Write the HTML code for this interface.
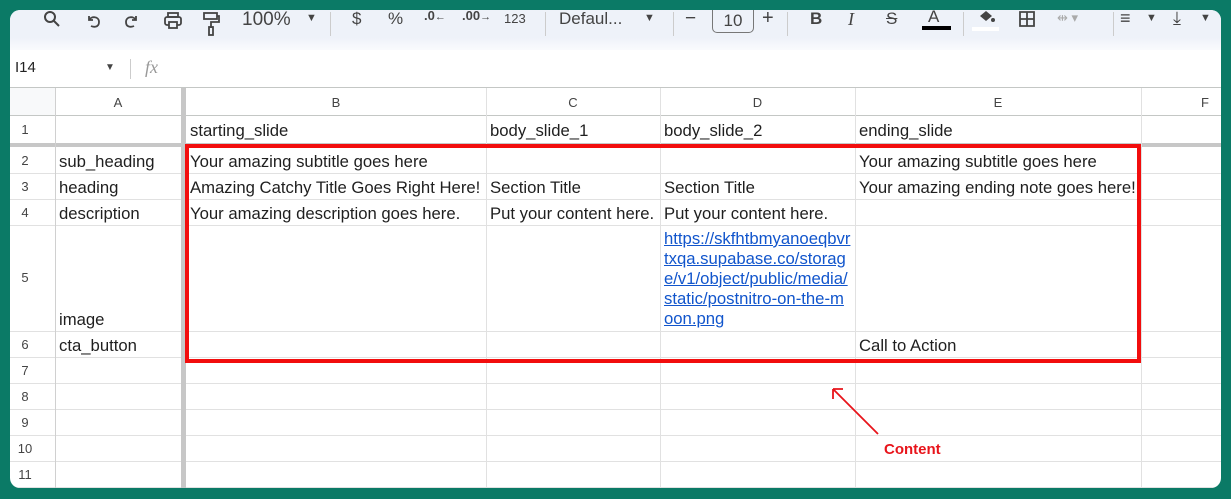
<!DOCTYPE html>
<html><head><meta charset="utf-8"><style>
*{margin:0;padding:0;box-sizing:border-box}
body{width:1231px;height:499px;background:#0b7a66;position:relative;overflow:hidden;font-family:"Liberation Sans",Arial,sans-serif}
#p{position:absolute;left:10px;top:10px;width:1211px;height:478px;background:#fff;border-radius:10px;overflow:hidden}
#tb{position:absolute;left:0;top:0;width:1211px;height:40px;background:linear-gradient(#eef2f9 0,#eef2f9 28px,#f6f8fc 36px,#fff 48px)}
.a{position:absolute;white-space:nowrap}
.t{font-size:16.7px;color:#1f1f1f}
.h{font-size:13px;color:#444;text-align:center}
.hl{position:absolute;height:1px;background:#e1e1e1;left:0;width:1211px}
.vl{position:absolute;width:1px;background:#e1e1e1;top:78px;height:400px}
#ti{position:absolute;left:0;top:2px;width:1211px;height:30px}
</style></head><body>
<div id="p">
<div id="tb"></div>
<div id="ti">
<svg class="a" style="left:32px;top:-2px" width="20" height="20" viewBox="0 0 20 20"><circle cx="8" cy="7" r="5" fill="none" stroke="#444" stroke-width="2"/><path d="M12 11l5 5" stroke="#444" stroke-width="2"/></svg>
<svg class="a" style="left:75px;top:0" width="18" height="18" viewBox="0 0 18 18"><path d="M4 4v4h4M4 8c2-4 10-4 10 2s-6 5-8 4" fill="none" stroke="#444" stroke-width="1.8"/></svg>
<svg class="a" style="left:112px;top:0" width="18" height="18" viewBox="0 0 18 18"><path d="M14 4v4h-4M14 8c-2-4-10-4-10 2s6 5 8 4" fill="none" stroke="#444" stroke-width="1.8"/></svg>
<svg class="a" style="left:152px;top:-2px" width="22" height="22" viewBox="0 0 22 22"><rect x="6" y="3" width="10" height="4" fill="none" stroke="#444" stroke-width="1.8"/><rect x="3" y="7" width="16" height="8" rx="2" fill="none" stroke="#444" stroke-width="1.8"/><rect x="7" y="12" width="8" height="6" fill="#eef2f9" stroke="#444" stroke-width="1.8"/></svg>
<svg class="a" style="left:191px;top:-2px" width="20" height="28" viewBox="0 0 20 28"><rect x="3" y="3" width="13" height="6" fill="none" stroke="#444" stroke-width="1.8"/><path d="M16 6h2v6h-8v6" fill="none" stroke="#444" stroke-width="1.8"/><rect x="8" y="17" width="4" height="8" fill="none" stroke="#444" stroke-width="1.8"/></svg>
<div class="a" style="left:232px;top:-3px;font-size:19px;color:#444">100%</div>
<div class="a" style="left:296px;top:0;font-size:11px;color:#444">▼</div>
<div class="a" style="left:320px;top:0;width:1px;height:24px;background:#ccc"></div>
<div class="a" style="left:342px;top:-3px;font-size:17px;color:#444">$</div>
<div class="a" style="left:378px;top:-3px;font-size:17px;color:#444">%</div>
<div class="a" style="left:414px;top:-4px;font-size:13px;color:#444;font-weight:bold">.0<span style="font-size:11px">←</span></div>
<div class="a" style="left:452px;top:-4px;font-size:13px;color:#444;font-weight:bold">.00<span style="font-size:11px">→</span></div>
<div class="a" style="left:494px;top:-1px;font-size:13px;color:#444">123</div>
<div class="a" style="left:535px;top:0;width:1px;height:24px;background:#ccc"></div>
<div class="a" style="left:549px;top:-3px;font-size:17px;color:#444">Defaul...</div>
<div class="a" style="left:634px;top:0;font-size:11px;color:#444">▼</div>
<div class="a" style="left:663px;top:0;width:1px;height:24px;background:#ccc"></div>
<div class="a" style="left:675px;top:-4px;font-size:19px;color:#444">−</div>
<div class="a" style="left:702px;top:-8px;width:42px;height:29px;border:1px solid #777;border-radius:5px;font-size:17px;color:#444;text-align:center;padding-top:6px">10</div>
<div class="a" style="left:752px;top:-5px;font-size:20px;color:#444">+</div>
<div class="a" style="left:777px;top:0;width:1px;height:24px;background:#ccc"></div>
<div class="a" style="left:800px;top:-3px;font-size:17px;font-weight:bold;color:#444">B</div>
<div class="a" style="left:838px;top:-3px;font-size:18px;font-family:'Liberation Serif',serif;font-style:italic;color:#444">I</div>
<div class="a" style="left:876px;top:-3px;font-size:17px;color:#444;text-decoration:line-through">S</div>
<div class="a" style="left:918px;top:-5px;font-size:17px;color:#444">A</div>
<div class="a" style="left:912px;top:14px;width:29px;height:4px;background:#000"></div>
<div class="a" style="left:953px;top:0;width:1px;height:24px;background:#ccc"></div>
<svg class="a" style="left:966px;top:-2px" width="20" height="16" viewBox="0 0 20 16"><path d="M4 6l6-5 6 5-6 5z" fill="#444"/><circle cx="17" cy="10" r="2" fill="#444"/></svg>
<div class="a" style="left:962px;top:15px;width:27px;height:4px;background:#fff"></div>
<svg class="a" style="left:1008px;top:-2px" width="18" height="18" viewBox="0 0 18 18"><path d="M2 2h14v14H2zM9 2v14M2 9h14" fill="none" stroke="#444" stroke-width="1.8"/></svg>
<div class="a" style="left:1047px;top:-2px;font-size:13px;color:#aaa">⇹ ▾</div>
<div class="a" style="left:1103px;top:0;width:1px;height:24px;background:#ccc"></div>
<div class="a" style="left:1110px;top:-4px;font-size:18px;color:#444">≡</div>
<div class="a" style="left:1136px;top:0;font-size:11px;color:#444">▼</div>
<div class="a" style="left:1163px;top:-4px;font-size:18px;color:#444">⤓</div>
<div class="a" style="left:1190px;top:0;font-size:11px;color:#444">▼</div>
</div>
<div class="a" style="left:5px;top:49px;font-size:15px;color:#222">I14</div>
<div class="a" style="left:95px;top:52px;font-size:10px;color:#444">▼</div>
<div class="a" style="left:120px;top:49px;width:1px;height:20px;background:#ccc"></div>
<div class="a" style="left:135px;top:47px;font-size:18px;font-family:'Liberation Serif',serif;font-style:italic;color:#999">fx</div>
<div class="a" style="left:0;top:78px;width:45px;height:28px;background:#f8f9fa"></div>
<div class="hl" style="top:77px;background:#c4c7c5"></div>
<div class="hl" style="top:105px;background:#c4c7c5"></div>
<div class="hl" style="top:133px;height:4px;background:#c7c7c7"></div>
<div class="hl" style="top:163px"></div>
<div class="hl" style="top:189px"></div>
<div class="hl" style="top:215px"></div>
<div class="hl" style="top:321px"></div>
<div class="hl" style="top:347px"></div>
<div class="hl" style="top:373px"></div>
<div class="hl" style="top:399px"></div>
<div class="hl" style="top:425px"></div>
<div class="hl" style="top:451px"></div>
<div class="hl" style="top:477px"></div>
<div class="vl" style="left:45px;background:#d0d0d0"></div>
<div class="vl" style="left:171px;width:5px;background:#c7c7c7"></div>
<div class="vl" style="left:476px"></div>
<div class="vl" style="left:650px"></div>
<div class="vl" style="left:845px"></div>
<div class="vl" style="left:1131px"></div>
<div class="a h" style="left:45px;top:85px;width:126px">A</div>
<div class="a h" style="left:176px;top:85px;width:300px">B</div>
<div class="a h" style="left:476px;top:85px;width:174px">C</div>
<div class="a h" style="left:650px;top:85px;width:195px">D</div>
<div class="a h" style="left:845px;top:85px;width:286px">E</div>
<div class="a h" style="left:1131px;top:85px;width:130px;text-align:left;padding-left:60px">F</div>
<div class="a h" style="left:0;top:112px;width:30px">1</div>
<div class="a h" style="left:0;top:143px;width:30px">2</div>
<div class="a h" style="left:0;top:169px;width:30px">3</div>
<div class="a h" style="left:0;top:195px;width:30px">4</div>
<div class="a h" style="left:0;top:260px;width:30px">5</div>
<div class="a h" style="left:0;top:327px;width:30px">6</div>
<div class="a h" style="left:0;top:353px;width:30px">7</div>
<div class="a h" style="left:0;top:379px;width:30px">8</div>
<div class="a h" style="left:0;top:405px;width:30px">9</div>
<div class="a h" style="left:0;top:431px;width:30px">10</div>
<div class="a h" style="left:0;top:457px;width:30px">11</div>
<div class="a t" style="left:180px;top:111px">starting_slide</div>
<div class="a t" style="left:480px;top:111px">body_slide_1</div>
<div class="a t" style="left:654px;top:111px">body_slide_2</div>
<div class="a t" style="left:849px;top:111px">ending_slide</div>
<div class="a t" style="left:49px;top:142px">sub_heading</div>
<div class="a t" style="left:180px;top:142px">Your amazing subtitle goes here</div>
<div class="a t" style="left:849px;top:142px">Your amazing subtitle goes here</div>
<div class="a t" style="left:49px;top:168px">heading</div>
<div class="a t" style="left:180px;top:168px">Amazing Catchy Title Goes Right Here!</div>
<div class="a t" style="left:480px;top:168px">Section Title</div>
<div class="a t" style="left:654px;top:168px">Section Title</div>
<div class="a t" style="left:849px;top:168px">Your amazing ending note goes here!</div>
<div class="a t" style="left:49px;top:194px">description</div>
<div class="a t" style="left:180px;top:194px">Your amazing description goes here.</div>
<div class="a t" style="left:480px;top:194px">Put your content here.</div>
<div class="a t" style="left:654px;top:194px">Put your content here.</div>
<div class="a t" style="left:49px;top:300px">image</div>
<div class="a t" style="left:654px;top:219px;line-height:20px;color:#1155cc;text-decoration:underline">https://skfhtbmyanoeqbvr<br>txqa.supabase.co/storag<br>e/v1/object/public/media/<br>static/postnitro-on-the-m<br>oon.png</div>
<div class="a t" style="left:49px;top:326px">cta_button</div>
<div class="a t" style="left:849px;top:326px">Call to Action</div>
<div class="a" style="left:175px;top:134px;width:956px;height:219px;border:4px solid #f20d0d"></div>
<svg class="a" style="left:815px;top:370px" width="60" height="60" viewBox="0 0 60 60"><path d="M53 54L8 9M8 9v10M8 9h10" fill="none" stroke="#e8141b" stroke-width="1.8"/></svg>
<div class="a" style="left:874px;top:431px;font-size:15px;font-weight:bold;color:#e8141b">Content</div>
</div>
</body></html>
